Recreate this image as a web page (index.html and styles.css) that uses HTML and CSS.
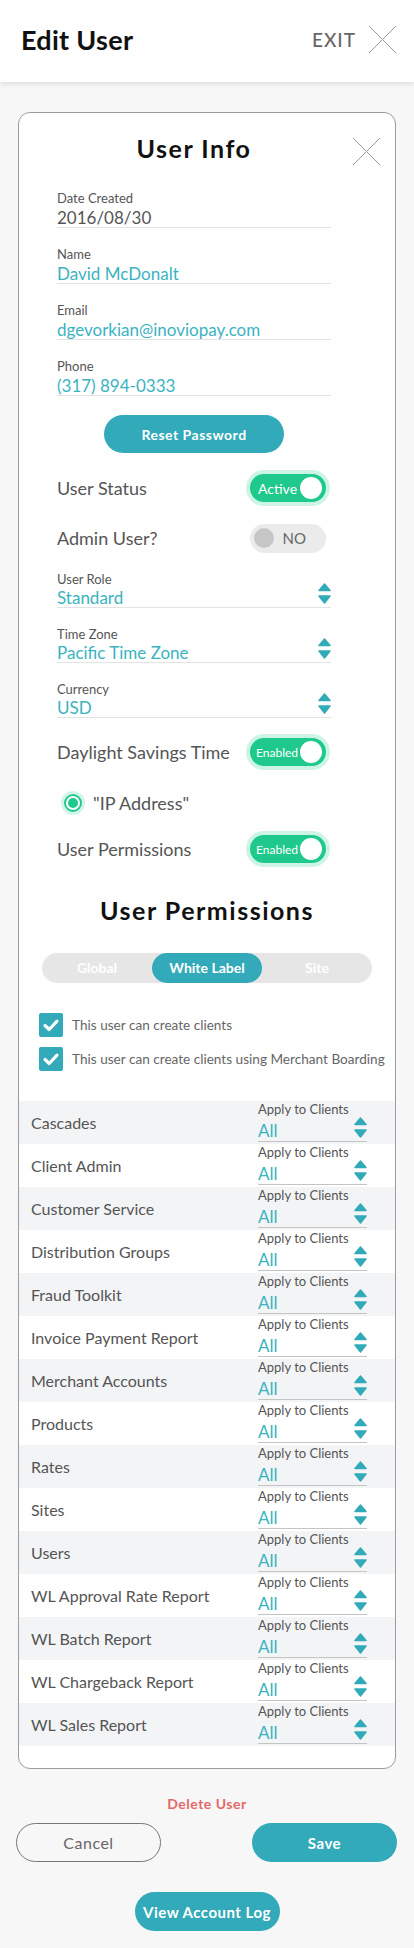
FILE: index.html
```html
<!DOCTYPE html>
<html lang="en">
<head>
    <meta charset="UTF-8">
    <meta name="viewport" content="width=device-width, initial-scale=1.0">
    <title>Edit User</title>
    <link rel="stylesheet" href="styles.css">
</head>
<body>
    <header class="topbar">
        <h1 class="page-title">Edit User</h1>
        <a class="exit">EXIT
            <svg class="x-icon" width="27" height="27" viewBox="0 0 27 27"><path d="M0 0L27 27M27 0L0 27" stroke="#9a9a9a" stroke-width="1"/></svg>
        </a>
    </header>

    <main class="page">
        <section class="card">
            <button class="card-close">
                <svg width="27" height="27" viewBox="0 0 27 27"><path d="M0 0L27 27M27 0L0 27" stroke="#9a9a9a" stroke-width="1"/></svg>
            </button>
            <h2 class="card-title info-title">User Info</h2>

            <div class="fields">
                <div class="field">
                    <span class="field-label">Date Created</span>
                    <div class="field-value plain">2016/08/30</div>
                </div>
                <div class="field">
                    <span class="field-label">Name</span>
                    <div class="field-value">David McDonalt</div>
                </div>
                <div class="field">
                    <span class="field-label">Email</span>
                    <div class="field-value">dgevorkian@inoviopay.com</div>
                </div>
                <div class="field">
                    <span class="field-label">Phone</span>
                    <div class="field-value">(317) 894-0333</div>
                </div>

                <button class="btn btn-reset">Reset Password</button>

                <div class="toggle-row status-row">
                    <span>User Status</span>
                    <span class="toggle on"><span class="toggle-text">Active</span><span class="knob"></span></span>
                </div>
                <div class="toggle-row admin-row">
                    <span>Admin User?</span>
                    <span class="toggle off"><span class="knob"></span><span class="toggle-text">NO</span></span>
                </div>

                <div class="select-field">
                    <div class="select-text">
                        <span class="field-label">User Role</span>
                        <div class="field-value">Standard</div>
                    </div>
                    <svg class="arrows" width="13" height="21" viewBox="0 0 13 21"><path d="M6.5 1L12 7.5H1Z M1 13H12L6.5 20Z" fill="#32aab9" stroke="#32aab9" stroke-width="1.5" stroke-linejoin="round"/></svg>
                </div>
                <div class="select-field">
                    <div class="select-text">
                        <span class="field-label">Time Zone</span>
                        <div class="field-value">Pacific Time Zone</div>
                    </div>
                    <svg class="arrows" width="13" height="21" viewBox="0 0 13 21"><path d="M6.5 1L12 7.5H1Z M1 13H12L6.5 20Z" fill="#32aab9" stroke="#32aab9" stroke-width="1.5" stroke-linejoin="round"/></svg>
                </div>
                <div class="select-field">
                    <div class="select-text">
                        <span class="field-label">Currency</span>
                        <div class="field-value">USD</div>
                    </div>
                    <svg class="arrows" width="13" height="21" viewBox="0 0 13 21"><path d="M6.5 1L12 7.5H1Z M1 13H12L6.5 20Z" fill="#32aab9" stroke="#32aab9" stroke-width="1.5" stroke-linejoin="round"/></svg>
                </div>

                <div class="toggle-row dst-row">
                    <span>Daylight Savings Time</span>
                    <span class="toggle on small"><span class="toggle-text">Enabled</span><span class="knob"></span></span>
                </div>
                <div class="radio-row">
                    <span class="radio"><span class="radio-dot"></span></span>
                    <span>"IP Address"</span>
                </div>
                <div class="toggle-row perm-row">
                    <span>User Permissions</span>
                    <span class="toggle on small"><span class="toggle-text">Enabled</span><span class="knob"></span></span>
                </div>
            </div>

            <h2 class="card-title perms-title">User Permissions</h2>

            <div class="tabs">
                <span class="tab">Global</span>
                <span class="tab active">White Label</span>
                <span class="tab">Site</span>
            </div>

            <div class="checks">
                <label class="check">
                    <svg width="24" height="24" viewBox="0 0 24 24"><rect width="24" height="24" rx="2" fill="#32aab9"/><path d="M6 12.5L10.2 16.5L18 8.2" fill="none" stroke="#fff" stroke-width="3.2" stroke-linecap="round" stroke-linejoin="round"/></svg>
                    This user can create clients
                </label>
                <label class="check">
                    <svg width="24" height="24" viewBox="0 0 24 24"><rect width="24" height="24" rx="2" fill="#32aab9"/><path d="M6 12.5L10.2 16.5L18 8.2" fill="none" stroke="#fff" stroke-width="3.2" stroke-linecap="round" stroke-linejoin="round"/></svg>
                    This user can create clients using Merchant Boarding
                </label>
            </div>

            <div class="perm-list"></div>
        </section>

        <div class="delete">Delete User</div>
        <div class="actions">
            <button class="btn btn-cancel">Cancel</button>
            <button class="btn btn-save">Save</button>
        </div>
        <button class="btn btn-log">View Account Log</button>
    </main>

    <script>
        const permissions = [
            "Cascades", "Client Admin", "Customer Service", "Distribution Groups",
            "Fraud Toolkit", "Invoice Payment Report", "Merchant Accounts", "Products",
            "Rates", "Sites", "Users", "WL Approval Rate Report", "WL Batch Report",
            "WL Chargeback Report", "WL Sales Report"
        ];

        const list = document.querySelector(".perm-list");

        // Build one row per permission
        permissions.forEach(name => {
            const row = document.createElement("div");
            row.className = "perm";
            row.innerHTML = `
                <span class="perm-name">${name}</span>
                <div class="perm-select">
                    <div class="select-text">
                        <span class="perm-label">Apply to Clients</span>
                        <div class="perm-value">All</div>
                    </div>
                    <svg class="arrows" width="13" height="21" viewBox="0 0 13 21"><path d="M6.5 1L12 7.5H1Z M1 13H12L6.5 20Z" fill="#32aab9" stroke="#32aab9" stroke-width="1.5" stroke-linejoin="round"/></svg>
                </div>
            `;
            list.appendChild(row);
        });
    </script>
</body>
</html>
```

FILE: styles.css
```css
body {
    margin: 0;
    background-color: #f7f7f7;
    font-family: 'Lato', 'Open Sans', sans-serif;
    color: #555;
}
button {
    font-family: inherit;
    cursor: pointer;
}
.topbar {
    height: 82px;
    box-sizing: border-box;
    padding: 0 18px 4px 21px;
    background-color: #fff;
    box-shadow: 0 2px 5px rgba(0, 0, 0, 0.1);
    display: flex;
    align-items: center;
    justify-content: space-between;
}
.page-title {
    margin: 0;
    font-size: 27px;
    font-weight: 700;
    letter-spacing: 0.3px;
    color: #111;
}
.exit {
    display: flex;
    align-items: center;
    gap: 13px;
    font-size: 19px;
    font-weight: 500;
    letter-spacing: 1px;
    color: #666;
}
.x-icon {
    display: block;
}
.page {
    padding: 30px 0 17px;
}
.card {
    position: relative;
    margin: 0 18px;
    padding: 20px 0 22px;
    background-color: #fff;
    border: 1px solid #9c9c9c;
    border-radius: 12px;
}
.card-close {
    position: absolute;
    top: 25px;
    right: 15px;
    padding: 0;
    border: none;
    background: none;
}
.card-close svg {
    display: block;
}
.card-title {
    margin: 0;
    text-align: center;
    font-size: 25px;
    line-height: 30px;
    font-weight: 700;
    letter-spacing: 1.5px;
    color: #111;
}
.info-title {
    padding-right: 26px;
}
.fields {
    margin-top: 27px;
    padding: 0 64px 0 38px;
}
.field {
    border-bottom: 1px solid #e3e3e3;
}
.field + .field {
    margin-top: 18px;
}
.field-label {
    display: block;
    font-size: 13px;
    line-height: 16px;
    color: #555;
}
.field-value {
    padding-top: 2px;
    font-size: 17px;
    line-height: 19px;
    color: #3ab3c1;
}
.field-value.plain {
    color: #555;
}
.btn {
    height: 38px;
    border: none;
    border-radius: 20px;
    background-color: #32aab9;
    color: #fff;
    font-size: 14px;
    font-weight: 700;
    letter-spacing: 0.5px;
}
.btn-reset {
    display: block;
    width: 180px;
    margin: 19px auto 0;
}
.toggle-row {
    height: 36px;
    display: flex;
    align-items: center;
    justify-content: space-between;
    font-size: 18px;
    color: #555;
}
.status-row {
    margin-top: 17px;
}
.admin-row {
    margin-top: 14px;
}
.dst-row {
    margin-top: 16px;
}
.perm-row {
    margin-top: 10px;
}
.toggle {
    width: 76px;
    height: 28px;
    margin-right: 5px;
    box-sizing: border-box;
    border-radius: 15px;
    display: flex;
    align-items: center;
    justify-content: space-between;
}
.toggle.on {
    padding: 0 4px 0 8px;
    background-color: #1fc98b;
    box-shadow: 0 0 0 4px #cdf4e4;
    color: #fff;
    font-size: 14px;
}
.toggle.on.small {
    padding-left: 6px;
    font-size: 12px;
}
.toggle.on .knob {
    width: 22px;
    height: 22px;
    border-radius: 50%;
    background-color: #fff;
}
.toggle.off {
    height: 29px;
    padding: 0 20px 0 4px;
    background-color: #ebebeb;
    color: #666;
    font-size: 15px;
}
.toggle.off .knob {
    width: 20px;
    height: 20px;
    border-radius: 50%;
    background-color: #c6c6c6;
}
.select-field {
    display: flex;
    justify-content: space-between;
    border-bottom: 1px solid #e3e3e3;
    margin-top: 15px;
}
.select-field + .select-field {
    margin-top: 18px;
}
.select-field .field-value {
    line-height: 18px;
}
.arrows {
    align-self: flex-end;
    margin-bottom: 3px;
    display: block;
}
.radio-row {
    margin-top: 15px;
    height: 36px;
    padding-left: 7px;
    display: flex;
    align-items: center;
    gap: 11px;
    font-size: 18px;
    color: #555;
}
.radio {
    width: 18px;
    height: 18px;
    box-sizing: border-box;
    border: 2px solid #1fc98b;
    border-radius: 50%;
    box-shadow: 0 0 0 3px #d3f5e8;
    display: flex;
    align-items: center;
    justify-content: center;
}
.radio-dot {
    width: 10px;
    height: 10px;
    border-radius: 50%;
    background-color: #1fc98b;
}
.perms-title {
    margin-top: 28px;
}
.tabs {
    margin: 28px 23px 0;
    height: 30px;
    border-radius: 15px;
    background-color: #e6e6e6;
    display: grid;
    grid-template-columns: repeat(3, 1fr);
}
.tab {
    text-align: center;
    line-height: 30px;
    font-size: 14px;
    font-weight: 700;
    color: #fff;
    border-radius: 15px;
}
.tab.active {
    background-color: #32aab9;
}
.checks {
    margin-top: 30px;
    padding-left: 20px;
}
.check {
    display: flex;
    align-items: center;
    gap: 9px;
    font-size: 13.6px;
    color: #666;
}
.check svg {
    display: block;
}
.check + .check {
    margin-top: 10px;
}
.perm-list {
    margin-top: 30px;
}
.perm {
    height: 43px;
    box-sizing: border-box;
    padding: 0 28px 0 12px;
    display: flex;
    justify-content: space-between;
}
.perm:nth-child(odd) {
    background-color: #f3f4f5;
}
.perm-name {
    align-self: center;
    font-size: 16px;
    color: #555;
}
.perm-select {
    width: 109px;
    margin-bottom: 2px;
    border-bottom: 1px solid #c4c4c4;
    display: flex;
    justify-content: space-between;
}
.perm-label {
    display: block;
    padding-top: 1px;
    font-size: 13px;
    line-height: 15px;
    color: #555;
}
.perm-value {
    padding-top: 3px;
    font-size: 17px;
    line-height: 21px;
    color: #3ab3c1;
}
.delete {
    margin-top: 26px;
    text-align: center;
    font-size: 14px;
    font-weight: 700;
    line-height: 18px;
    letter-spacing: 0.5px;
    color: #e36868;
}
.actions {
    margin-top: 10px;
    padding: 0 17px 0 16px;
    display: flex;
    justify-content: space-between;
}
.btn-cancel {
    width: 145px;
    height: 39px;
    background-color: transparent;
    border: 1px solid #777;
    color: #666;
    font-size: 16px;
    font-weight: 400;
}
.btn-save {
    width: 145px;
    height: 39px;
    font-size: 15px;
}
.btn-log {
    display: block;
    width: 145px;
    height: 39px;
    margin: 30px auto 0;
    font-size: 15px;
}
```
